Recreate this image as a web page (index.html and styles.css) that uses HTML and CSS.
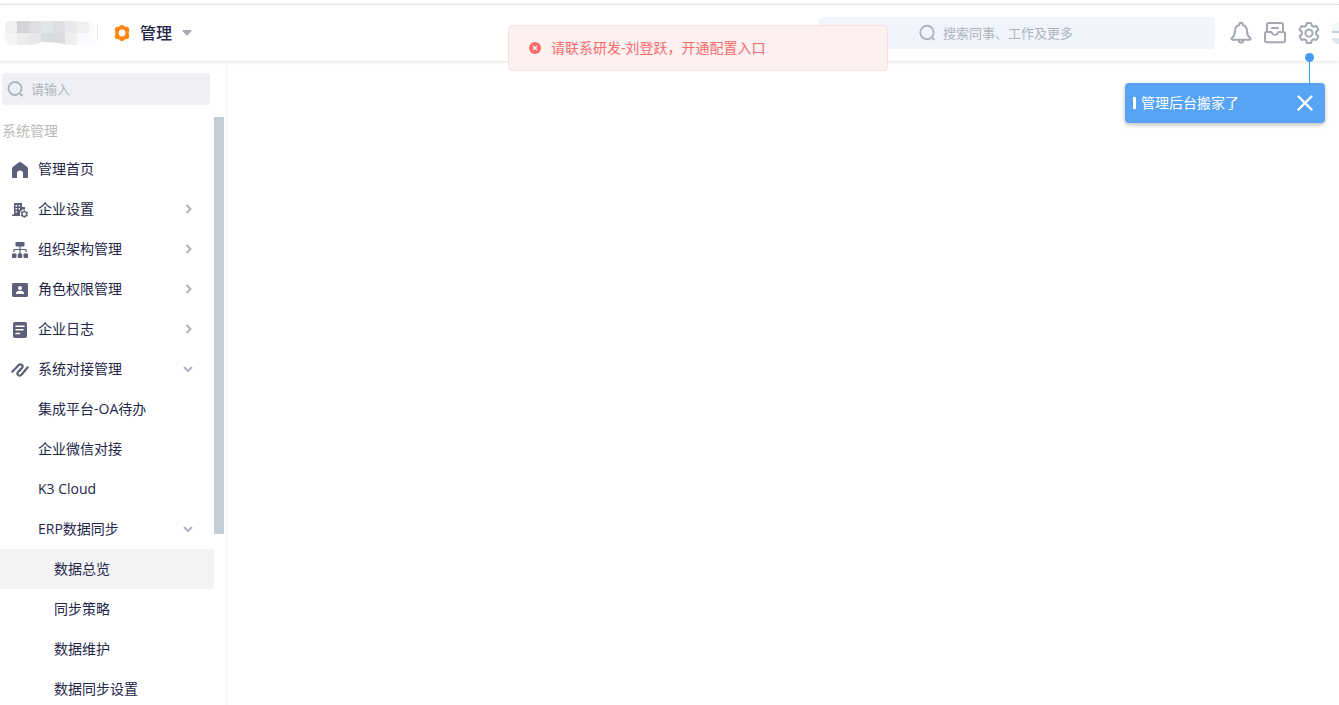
FILE: index.html
```
<!DOCTYPE html>
<html lang="zh-CN">
<head>
    <meta charset="UTF-8">
    <meta name="viewport" content="width=device-width, initial-scale=1.0">
    <title>管理</title>
    <link rel="stylesheet" href="styles.css">
</head>
<body>
    <header class="header">
        <svg class="logo" width="92" height="24" viewBox="0 0 92 24" aria-hidden="true">
            <clipPath id="logoShape"><path d="M5 0H68Q76 0 84 1.500Q90 2 90 6V24H62Q54 21 36 21Q32 24 27 24H6Q0 23 0 18V5Q0 0 5 0Z"/></clipPath>
            <g clip-path="url(#logoShape)">
                <path fill="#efeff0" d="M0 0h12v12H0z"/><path fill="#d3d3d8" d="M12 0h12v12H12z"/>
                <path fill="#dedfe2" d="M24 0h12v12H24z"/><path fill="#e2e6e9" d="M36 0h12v12H36z"/>
                <path fill="#dddfe2" d="M48 0h12v12H48z"/><path fill="#e9e9eb" d="M60 0h12v12H60z"/>
                <path fill="#efeff0" d="M72 0h12v12H72z"/><path fill="#fbfbfc" d="M84 0h8v24h-8z"/>
                <path fill="#f5f5f5" d="M0 12h12v12H0z"/><path fill="#ececed" d="M12 12h12v12H12z"/>
                <path fill="#e8e8ea" d="M24 12h12v12H24z"/><path fill="#d9dce1" d="M36 12h12v12H36z"/>
                <path fill="#d9dbdf" d="M48 12h12v12H48z"/><path fill="#eeeeef" d="M60 12h12v12H60z"/>
                <path fill="#f8fafd" d="M72 12h12v12H72z"/>
            </g>
        </svg>
        <button class="app-switch">
            <svg width="16" height="16" viewBox="0 0 16 16" aria-hidden="true">
                <path fill="#ff8613" fill-rule="evenodd" d="M6.300.6Q8-.6 9.700.6L11 1.700l1.800.1Q14.800 2.300 15.300 4l-.4 2.200Q14.500 8 14.900 9.800l.4 2.200q-.5 1.700-2.500 2.200l-1.800.1-1.300 1.100Q8 16.600 6.300 15.400L5 14.300l-1.800-.1Q1.200 13.700.7 12l.4-2.200Q1.500 8 1.100 6.200L.7 4q.5-1.700 2.500-2.200L5 1.700zM8 4.600a3.400 3.400 0 1 0 0 6.800 3.400 3.400 0 0 0 0-6.800z"/>
            </svg>
            <span class="app-name">管理</span>
            <svg width="10" height="6" viewBox="0 0 10 6" aria-hidden="true"><path fill="#a9adba" d="M1 0h8q1 0 .6 1L5.500 5.600q-.5.500-1 0L.4 1Q0 0 1 0z"/></svg>
        </button>
        <label class="global-search">
            <svg width="18" height="18" viewBox="0 0 18 18" aria-hidden="true"><g fill="none" stroke="#b0b4bf" stroke-width="1.900"><circle cx="9" cy="8.500" r="6.700"/><path d="M13.500 13.200l3 3"/></g></svg>
            <input type="text" placeholder="搜索同事、工作及更多" aria-label="搜索">
        </label>
        <div class="tools">
            <button aria-label="通知">
                <svg width="22" height="22" viewBox="0 0 22 22"><g fill="none" stroke="#a4a8b3" stroke-width="2" stroke-linejoin="round" stroke-linecap="round"><path d="M9.300 3V1.600q0-.6.600-.6h2.200q.6 0 .6.600V3C15.600 3.800 17 6 17 9c0 4 1 5.300 3 6.800.9.800.6 2-.6 2H2.600c-1.200 0-1.500-1.200-.6-2C4 14.300 5 13 5 9c0-3 1.400-5.200 4.300-6z"/><path d="M9 18.500c0 3 4 3 4 0"/></g></svg>
            </button>
            <button aria-label="收件箱">
                <svg width="22" height="22" viewBox="0 0 22 22"><g fill="none" stroke="#a4a8b3" stroke-width="2" stroke-linejoin="round" stroke-linecap="round"><path d="M3 10V3q0-2 2-2h12q2 0 2 2v7"/><path d="M2.500 10H7q.8 0 1.200 1.200c.6 2.200 5 2.200 5.600 0Q14.200 10 15 10h4.500q1.500 0 1.500 1.600v7q0 1.600-1.600 1.600H2.600Q1 20.200 1 18.600v-7Q1 10 2.500 10zM8 6h6"/></g></svg>
            </button>
            <button aria-label="设置">
                <svg width="22" height="22" viewBox="0 0 22 22"><g fill="none" stroke="#a4a8b3" stroke-width="2" stroke-linejoin="round"><path d="M9.300 1h3.400q.6 0 .7.700l.3 2 1.900 1.100 2-.7q.7-.3 1.100.4l1.500 2.700q.4.700-.2 1.100l-1.700 1.300q-.6 1.400 0 2.800l1.700 1.300q.6.400.2 1.100l-1.500 2.700q-.4.700-1.100.4l-2-.7-1.900 1.100-.3 2q-.1.700-.7.700H9.300q-.6 0-.7-.7l-.3-2-1.900-1.100-2 .7q-.7.300-1.100-.4l-1.500-2.700q-.4-.7.200-1.100l1.700-1.300q.6-1.400 0-2.800L2 8.300q-.6-.4-.2-1.100l1.500-2.700q.4-.7 1.100-.4l2 .7 1.900-1.100.3-2q.1-.7.700-.7z"/><circle cx="11" cy="11" r="3.600"/></g></svg>
            </button>
            <span class="avatar"></span>
        </div>
    </header>

    <div class="layout">
        <aside class="sidebar">
            <label class="menu-search">
                <svg width="18" height="18" viewBox="0 0 18 18" aria-hidden="true"><g fill="none" stroke="#b3b5be" stroke-width="1.900"><circle cx="8" cy="8.500" r="6.500"/><path d="M12.700 13.200l3 3"/></g></svg>
                <input type="text" placeholder="请输入" aria-label="搜索菜单">
            </label>
            <div class="menu-scroll">
                <nav class="menu">
                    <p class="menu-title">系统管理</p>
                    <a class="item" href="#">
                        <svg width="16" height="18" viewBox="0 -2 16 18"><path fill="#5d6078" d="M8 0q.6 0 1 .3l6 4.400q1 .8 1 2V15q0 1-1 1h-4v-4.500a3 3 0 0 0-6 0V16H1q-1 0-1-1V6.700q0-1.200 1-2L7 .3Q7.400 0 8 0z"/></svg>
                        <span>管理首页</span>
                    </a>
                    <a class="item" href="#">
                        <svg width="16" height="18" viewBox="0 -2 16 18"><path fill="#5d6078" fill-rule="evenodd" d="M2 1h8v4h3v2.500h-2.500L8 10v4H0v-1.500h2zM3.500 3v1.500H5V3zm3 0v1.500H8V3zm-3 3v1.500H5V6zm3 0v1.500H8V6zm-3 3v1.500H5V9z"/><circle cx="12.300" cy="12" r="2.400" fill="none" stroke="#5d6078" stroke-width="1.400"/><path stroke="#5d6078" stroke-width="1.400" d="M12.300 8.200v1.400m0 4.800v1.400M9 10.100l1.200.7m4.200 2.400l1.200.7m-6.600 0l1.200-.7m4.200-2.400l1.200-.7"/></svg>
                        <span>企业设置</span>
                        <svg class="arrow" width="10" height="10" viewBox="0 0 10 10"><path d="M3.500 1l4 4-4 4"/></svg>
                    </a>
                    <a class="item" href="#">
                        <svg width="16" height="18" viewBox="0 -2 16 18"><g fill="#5d6078"><rect x="3.500" width="9" height="4.500" rx="1"/><rect y="11.500" width="4.500" height="4.500" rx="1"/><rect x="5.750" y="11.500" width="4.500" height="4.500" rx="1"/><rect x="11.500" y="11.500" width="4.500" height="4.500" rx="1"/></g><path fill="none" stroke="#5d6078" stroke-width="1.200" d="M8 4v8M2 10V7.500h12V10"/></svg>
                        <span>组织架构管理</span>
                        <svg class="arrow" width="10" height="10" viewBox="0 0 10 10"><path d="M3.500 1l4 4-4 4"/></svg>
                    </a>
                    <a class="item" href="#">
                        <svg width="16" height="18" viewBox="0 -2 16 18"><rect y="1" width="16" height="14" rx="1.500" fill="#5d6078"/><circle cx="8" cy="6" r="2" fill="#fff"/><path fill="#fff" d="M4 12v-1.200C4 9.300 6 8.700 8 8.700s4 .6 4 2.100V12z"/></svg>
                        <span>角色权限管理</span>
                        <svg class="arrow" width="10" height="10" viewBox="0 0 10 10"><path d="M3.500 1l4 4-4 4"/></svg>
                    </a>
                    <a class="item" href="#">
                        <svg width="16" height="18" viewBox="0 -2 16 18"><rect x="1" width="14" height="16" rx="2" fill="#5d6078"/><path stroke="#fff" stroke-width="1.500" stroke-linecap="round" d="M4 4.200h8M4 7.800h7M4 11.500h3.500"/></svg>
                        <span>企业日志</span>
                        <svg class="arrow" width="10" height="10" viewBox="0 0 10 10"><path d="M3.500 1l4 4-4 4"/></svg>
                    </a>
                    <a class="item" href="#">
                        <svg class="wide" width="18" height="18" viewBox="0 -2 18 18"><g fill="none" stroke="#5d6078" stroke-width="2.200" stroke-linecap="round" stroke-linejoin="round"><path d="M1.300 9.700l6.200-6.500q1.800-1.700 3.500-.2 1.400 1.500-.2 3.300L8.200 9"/><path d="M16.700 5.300l-6.200 7.500q-1.800 1.700-3.500.2-1.400-1.500.2-3.300L9.800 7"/></g></svg>
                        <span>系统对接管理</span>
                        <svg class="arrow" width="10" height="10" viewBox="0 0 10 10"><path d="M1 3l4 4 4-4"/></svg>
                    </a>
                    <a class="item level-2" href="#">集成平台-OA待办</a>
                    <a class="item level-2" href="#">企业微信对接</a>
                    <a class="item level-2" href="#">K3 Cloud</a>
                    <a class="item level-2" href="#">
                        <span>ERP数据同步</span>
                        <svg class="arrow" width="10" height="10" viewBox="0 0 10 10"><path d="M1 3l4 4 4-4"/></svg>
                    </a>
                    <a class="item level-3 active" href="#">数据总览</a>
                    <a class="item level-3" href="#">同步策略</a>
                    <a class="item level-3" href="#">数据维护</a>
                    <a class="item level-3" href="#">数据同步设置</a>
                </nav>
                <div class="scrollbar"></div>
            </div>
        </aside>
        <main class="content"></main>
    </div>

    <div class="message" role="alert">
        <svg width="12" height="12" viewBox="0 0 12 12" aria-hidden="true"><circle cx="6" cy="6" r="6" fill="#f56c6c"/><path stroke="#fff" stroke-width="1.100" d="M4 4l4 4M8 4L4 8"/></svg>
        <span>请联系研发-刘登跃，开通配置入口</span>
    </div>

    <div class="guide">
        <span>管理后台搬家了</span>
        <button aria-label="关闭">
            <svg width="16" height="16" viewBox="0 0 16 16"><path stroke="#fff" stroke-width="2.400" stroke-linecap="round" d="M1.500 1.500l13 13m0-13l-13 13"/></svg>
        </button>
    </div>
</body>
</html>
```
FILE: styles.css
```
* {
    box-sizing: border-box;
}
body {
    margin: 0;
    height: 100vh;
    padding-top: 4px;
    display: flex;
    flex-direction: column;
    overflow: hidden;
    position: relative;
    background: #fff;
    color: #24264a;
    font-family: "Open Sans", "Noto Sans CJK SC", sans-serif;
    font-size: 14px;
    line-height: 20px;
}
button {
    padding: 0;
    border: none;
    background: none;
    color: inherit;
    font: inherit;
    cursor: pointer;
}
svg {
    display: block;
    flex: none;
}
input {
    flex: 1;
    min-width: 0;
    padding: 0;
    border: none;
    outline: none;
    background: none;
    font: inherit;
    font-size: 13px;
}
input::placeholder {
    color: #b0b3bd;
}
.header {
    flex: none;
    display: flex;
    align-items: center;
    height: 57px;
    padding-left: 5px;
    border-top: 1px solid #e2e2e2;
    box-shadow: 0 1px 3px rgba(0, 0, 0, 0.12);
    position: relative;
    background: #fff;
}
.app-switch {
    display: flex;
    align-items: center;
    gap: 10px;
    height: 16px;
    padding-left: 16px;
    border-left: 1px solid #e4e5e9;
}
.app-name {
    font-size: 16px;
    font-weight: 500;
}
.global-search {
    display: flex;
    align-items: center;
    gap: 7px;
    width: 396px;
    height: 32px;
    margin-left: auto;
    padding-left: 99px;
    border-radius: 4px;
    background: #eff4fd;
}
.tools {
    display: flex;
    align-items: center;
    gap: 12px;
    padding-left: 15px;
}
.avatar {
    width: 7px;
    height: 22px;
    border-radius: 11px 0 0 11px;
    background: linear-gradient(#f5f8f9 40%, #c3d1dc 40%, #c3d1dc 50%, #fff 50%, #fff 75%, #dce6ea 75%);
}
.layout {
    flex: 1;
    display: flex;
    min-height: 0;
}
.sidebar {
    flex: none;
    display: flex;
    flex-direction: column;
    width: 227px;
    padding-top: 12px;
    border-right: 1px solid #f5f5f7;
    box-shadow: 1px 0 1px rgba(0, 0, 0, 0.02);
}
.menu-search {
    flex: none;
    display: flex;
    align-items: center;
    gap: 6px;
    width: 208px;
    height: 32px;
    margin: 0 2px 12px;
    padding-left: 5px;
    border-radius: 4px;
    background: #eff0f6;
}
.menu-scroll {
    flex: 1;
    display: flex;
    min-height: 0;
}
.menu {
    width: 214px;
    overflow: hidden;
}
.menu-title {
    margin: 0;
    padding: 4px 2px 8px;
    color: #b9b9b9;
}
.item {
    display: flex;
    align-items: center;
    gap: 10px;
    height: 40px;
    padding: 0 21px 0 12px;
    color: inherit;
    text-decoration: none;
}
.item .wide {
    margin: 0 -1px;
}
.item.level-2 {
    padding-left: 38px;
}
.item.level-3 {
    padding-left: 54px;
}
.item.active {
    background: #f4f4f7;
}
.item .arrow {
    margin-left: auto;
    fill: none;
    stroke: #b1b3bd;
    stroke-width: 2;
}
.scrollbar {
    width: 10px;
    height: 71%;
    background: #c4cdd5;
}
.content {
    flex: 1;
}
.message {
    position: absolute;
    top: 25px;
    left: 508px;
    display: flex;
    align-items: center;
    gap: 10px;
    width: 380px;
    height: 46px;
    padding: 0 20px;
    border: 1px solid #fadfe0;
    border-radius: 4px;
    background: #fdf0f0;
    color: #f56c6c;
}
.guide {
    position: absolute;
    top: 83px;
    right: 14px;
    display: flex;
    align-items: center;
    width: 200px;
    height: 40px;
    padding: 0 12px 0 8px;
    border-radius: 4px;
    background: #57a3f5;
    box-shadow: 0 2px 4px rgba(0, 0, 0, 0.25);
    color: #fff;
}
.guide span {
    padding-left: 5px;
    border-left: 3px solid #fff;
    line-height: 12px;
}
.guide button {
    margin-left: auto;
}
/* pointer from the guide up to the settings icon */
.guide::before,
.guide::after {
    content: "";
    position: absolute;
    background: #459af4;
}
.guide::before {
    right: 15px;
    bottom: 100%;
    width: 1px;
    height: 24px;
}
.guide::after {
    right: 11px;
    top: -30px;
    width: 9px;
    height: 9px;
    border-radius: 50%;
}
```
